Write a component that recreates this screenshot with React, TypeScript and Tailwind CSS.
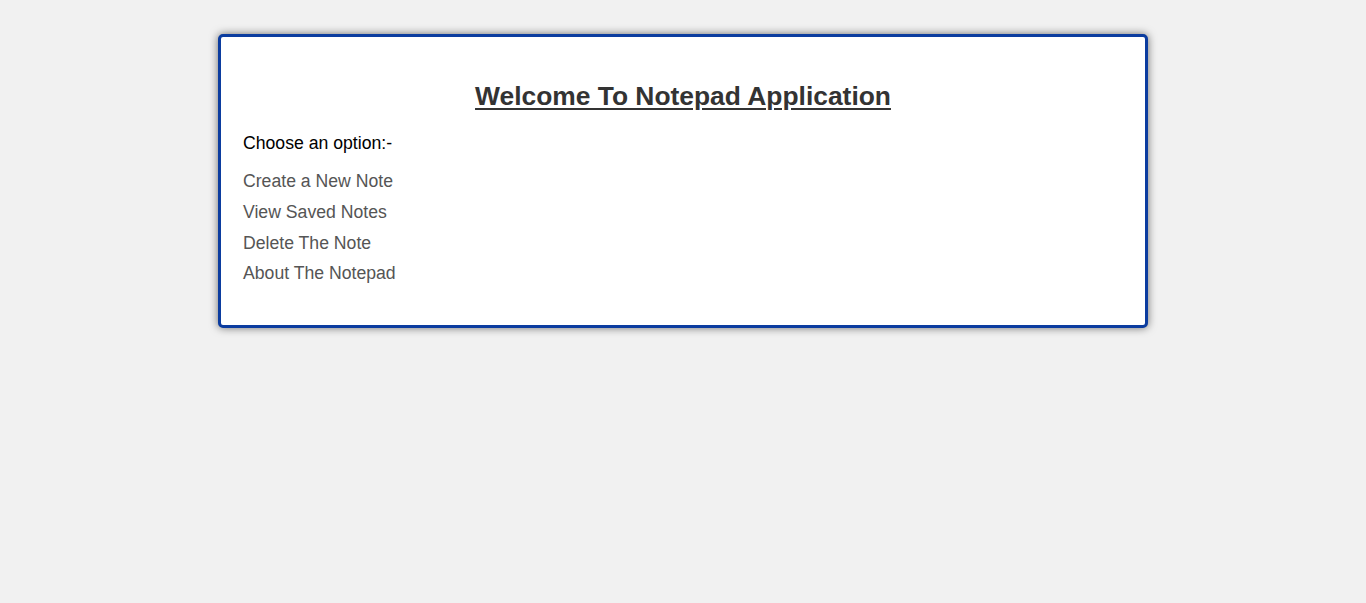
const options = ['Create a New Note', 'View Saved Notes', 'Delete The Note', 'About The Notepad'];

const App = () => {
  return (
    <div className="min-h-[603px] bg-[#f1f1f1] pt-[34px] font-['Liberation_Sans',Arial,sans-serif]">
      <div className="mx-auto w-[930px] rounded-[5px] border-[3px] border-[#0b3c9f] bg-white px-[22px] pt-[44px] pb-[36px] shadow-[0_0_9px_rgba(0,0,0,0.55)]">
        <h1 className="text-center text-[26.4px] leading-[30px] font-bold text-[#333] underline underline-offset-[3px]">
          Welcome To Notepad Application
        </h1>
        <p className="mt-[22px] text-[17.65px] leading-[21px] text-black">Choose an option:-</p>
        <ul className="mt-[12px]">
          {options.map((item) => (
            <li key={item} className="text-[17.65px] leading-[30.8px] text-[#555]">
              <a href="#">{item}</a>
            </li>
          ))}
        </ul>
      </div>
    </div>
  );
};

export default App;
